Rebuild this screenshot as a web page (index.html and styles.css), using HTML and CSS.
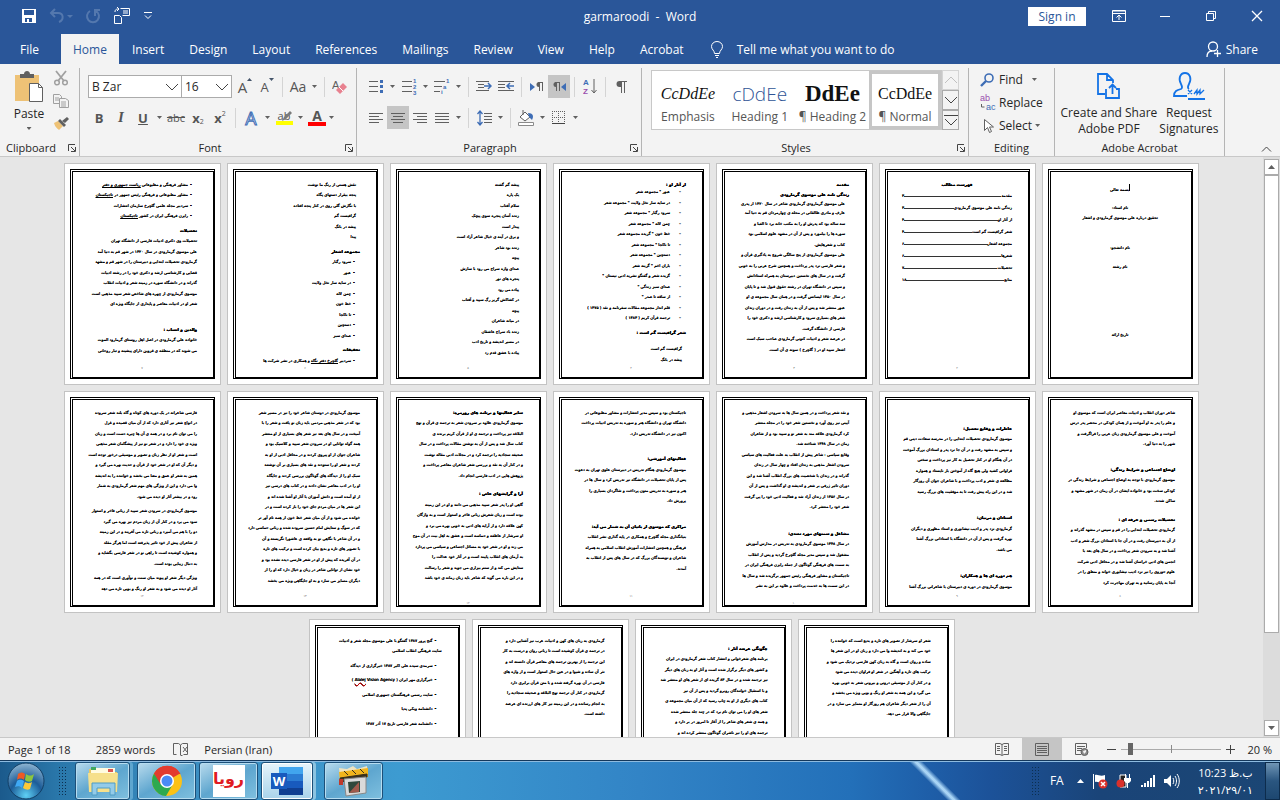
FILE: index.html
```html
<!DOCTYPE html>
<html lang="en">
<head>
    <meta charset="UTF-8">
    <meta name="viewport" content="width=device-width, initial-scale=1.0">
    <title>garmaroodi - Word</title>
    <link rel="stylesheet" href="styles.css">
</head>
<body>
    <!-- Title bar -->
    <header class="titlebar">
        <div class="quick">
            <button aria-label="Save"><svg width="16" height="16" viewBox="0 0 16 16"><path d="M1 1h14v14H1z" fill="#fff"/><path d="M3 2h10v5H3zM4 10h7v4H4z" fill="#2a5699"/><path d="M6 11h2v3H6z" fill="#fff"/></svg></button>
            <button class="dim" aria-label="Undo"><svg width="24" height="16" viewBox="0 0 24 16"><path d="M6 1 2 5l4 4M2 5h7c6 0 6 7 1 9" fill="none" stroke="#5478ae" stroke-width="2"/><path d="M18 7h6l-3 3z" fill="#5478ae"/></svg></button>
            <button class="dim" aria-label="Redo"><svg width="16" height="16" viewBox="0 0 16 16"><path d="M11 3a6 6 0 1 1-6 0M10 8V2h5" fill="none" stroke="#5478ae" stroke-width="2"/></svg></button>
            <button aria-label="Touch mode"><svg width="18" height="18" viewBox="0 0 18 18"><path d="M1.500 8.500h5l2 2v6h-7zM7.500 1.500h9v7h-7M10 4h5M10 6h5M2 5c0-3 2-3 4-3M4 0l2 2-2 2" fill="none" stroke="#fff"/></svg></button>
            <button aria-label="Customize"><svg width="10" height="8" viewBox="0 0 10 8"><path d="M1 .5h8M2 3.500l3 3 3-3" fill="none" stroke="#fff"/></svg></button>
        </div>
        <h1>garmaroodi&nbsp; -&nbsp; Word</h1>
        <div class="window-tools">
            <button class="sign-in">Sign in</button>
            <button aria-label="Ribbon display"><svg width="14" height="12" viewBox="0 0 14 12"><path d="M.5 1h13M.5.5h13v11H.5zM.5 3.500h13M7 10V5M4.500 7.500 7 5l2.500 2.500" fill="none" stroke="#fff"/></svg></button>
            <button aria-label="Minimize"><svg width="12" height="12" viewBox="0 0 12 12"><path d="M1 6.500h10" stroke="#fff"/></svg></button>
            <button aria-label="Restore"><svg width="12" height="12" viewBox="0 0 12 12"><path d="M1.500 3.500h7v7h-7zM3.500 3V1.500h7v7H9" fill="none" stroke="#fff"/></svg></button>
            <button aria-label="Close"><svg width="12" height="12" viewBox="0 0 12 12"><path d="m1 1 10 10M11 1 1 11" stroke="#fff" stroke-width="1.300"/></svg></button>
        </div>
    </header>

    <nav class="tabs">
        <a class="file" href="#">File</a>
        <a class="active" href="#">Home</a>
        <a href="#">Insert</a>
        <a href="#">Design</a>
        <a href="#">Layout</a>
        <a href="#">References</a>
        <a href="#">Mailings</a>
        <a href="#">Review</a>
        <a href="#">View</a>
        <a href="#">Help</a>
        <a href="#">Acrobat</a>
        <a class="tell" href="#"><svg width="12" height="17" viewBox="0 0 12 17"><path d="M3.500 12.500c0-3-3-4-3-7a5.500 5 0 0 1 11 0c0 3-3 4-3 7zM4 14.500h4M5 16.500h2" fill="none" stroke="#fff"/></svg>Tell me what you want to do</a>
        <a class="share" href="#"><svg width="16" height="16" viewBox="0 0 16 16"><circle cx="7" cy="5.500" r="4.500" fill="none" stroke="#fff" stroke-width="1.300"/><path d="M1 16c0-4 2-6 5-6M8 12.500h7M11.500 9v7" fill="none" stroke="#fff" stroke-width="1.300"/></svg>Share</a>
    </nav>

    <!-- Ribbon -->
    <section class="ribbon">
        <div class="group clipboard">
            <div class="group-body">
                <button class="paste">
                    <svg width="30" height="32" viewBox="0 0 30 32"><path d="M1 4h24v26H1z" fill="#eec276"/><path d="M6 3h4c0-4 6-4 6 0h4v4H6z" fill="#606060"/><path d="M15.500 12.500h9l4 4v14h-13z" fill="#fff" stroke="#606060"/><path d="M24.500 12.500v4h4" fill="none" stroke="#606060"/></svg>
                    Paste
                    <i class="drop"></i>
                </button>
                <div class="stack">
                    <button aria-label="Cut"><svg width="16" height="16" viewBox="0 0 16 16"><path d="m3 1 8 10M13 1 5 11" stroke="#a0a0a0" stroke-width="1.800"/><circle cx="4" cy="12.500" r="2.300" fill="none" stroke="#a0a0a0" stroke-width="1.500"/><circle cx="12" cy="12.500" r="2.300" fill="none" stroke="#a0a0a0" stroke-width="1.500"/></svg></button>
                    <button aria-label="Copy"><svg width="16" height="14" viewBox="0 0 16 14"><path d="M.5.5h6l2 2v7h-8zM2 4h4M2 6h4" fill="none" stroke="#a0a0a0"/><path d="M6.500 4.500h6l3 2v7h-9z" fill="#f3f3f3" stroke="#a0a0a0"/><path d="M8 8h5M8 10h5M8 12h5" stroke="#a0a0a0"/></svg></button>
                    <button aria-label="Format painter"><svg width="16" height="14" viewBox="0 0 16 14"><path d="m1 7 4-2 5 5-4 4C4 12 2 11 1 7z" fill="#eec276"/><path d="m5 5 2-2 6 6-2 2z" fill="#606060"/><path d="m9 5 5-4 2 2-4 4z" fill="#606060"/></svg></button>
                </div>
            </div>
            <h2>Clipboard<svg class="launch" width="8" height="8" viewBox="0 0 8 8"><path d="M.5 7V.5H7M3 3l4 4M7.500 3v4.500H3" fill="none" stroke="#444"/></svg></h2>
        </div>

        <div class="group font">
            <div class="group-body rows">
                <div class="row">
                    <label class="combo family"><select aria-label="Font"><option>B Zar</option></select><svg width="14" height="8" viewBox="0 0 14 8"><path d="m1 1 6 6 6-6" fill="none" stroke="#444"/></svg></label>
                    <label class="combo size"><select aria-label="Font size"><option>16</option></select><svg width="14" height="8" viewBox="0 0 14 8"><path d="m1 1 6 6 6-6" fill="none" stroke="#444"/></svg></label>
                    <button class="big" aria-label="Grow font">A<svg width="5" height="3" viewBox="0 0 5 3"><path d="M0 3h5L2.500 0z" fill="#44546a"/></svg></button>
                    <button aria-label="Shrink font">A<svg width="5" height="3" viewBox="0 0 5 3"><path d="M0 0h5L2.500 3z" fill="#44546a"/></svg></button>
                    <i class="sep"></i>
                    <button class="case">Aa</button><i class="drop"></i>
                    <i class="sep"></i>
                    <button aria-label="Clear formatting"><svg class="erase" width="16" height="18" viewBox="0 0 16 18"><text x="0" y="11" fill="#606060">A</text><path d="m4 12 7-7 4 4-7 7z" fill="#e8818f"/><path d="m7 9 4 4" stroke="#fff"/></svg></button>
                </div>
                <div class="row">
                    <button><b>B</b></button>
                    <button class="serif"><b><i>I</i></b></button>
                    <button><u><b>U</b></u></button><i class="drop"></i>
                    <button class="strike"><s>abc</s></button>
                    <button><b>x</b><sub>2</sub></button>
                    <button><b>x</b><sup>2</sup></button>
                    <i class="sep"></i>
                    <button class="effects" aria-label="Text effects">A</button><i class="drop"></i>
                    <button class="mark" aria-label="Highlight">ab<svg width="17" height="16" viewBox="0 0 17 16"><path d="M0 12h17v4H0z" fill="#ff0"/><path d="m6 12 2-4 6-6 2 2-6 6z" fill="#7a7a7a"/></svg></button><i class="drop"></i>
                    <button class="color">A</button><i class="drop"></i>
                </div>
            </div>
            <h2>Font<svg class="launch" width="8" height="8" viewBox="0 0 8 8"><path d="M.5 7V.5H7M3 3l4 4M7.500 3v4.500H3" fill="none" stroke="#444"/></svg></h2>
        </div>

        <div class="group para">
            <div class="group-body rows">
                <div class="row">
                    <button aria-label="Bullets"><svg width="14" height="15" viewBox="0 0 14 15"><path d="M0 2.500h9M0 7.500h9M0 12.500h9" stroke="#606060"/><path d="M11 1h3v3h-3zM11 6h3v3h-3zM11 11h3v3h-3z" fill="#3e6db5"/></svg></button><i class="drop"></i>
                    <button aria-label="Numbering"><svg class="digits" width="15" height="19" viewBox="0 0 15 19"><path d="M0 4.500h10M0 9.500h10M0 14.500h10" stroke="#606060"/><text x="11" y="6">1</text><text x="11" y="12">2</text><text x="11" y="18">3</text></svg></button><i class="drop"></i>
                    <button aria-label="Multilevel list"><svg class="digits" width="16" height="19" viewBox="0 0 16 19"><path d="M0 4.500h11M0 9.500h8M0 14.500h6" stroke="#606060"/><text x="12" y="6">1</text><text x="9" y="12">a</text><text x="7" y="17">i</text></svg></button><i class="drop"></i>
                    <i class="sep"></i>
                    <button aria-label="Decrease indent"><svg width="16" height="11" viewBox="0 0 16 11"><path d="M0 .5h13M2 3.500h6M2 6.500h6M0 9.500h13" stroke="#606060"/><path d="M8 5h7M12 2l3 3-3 3" fill="none" stroke="#3e6db5" stroke-width="1.500"/></svg></button>
                    <button aria-label="Increase indent"><svg width="16" height="11" viewBox="0 0 16 11"><path d="M0 .5h16M0 3.500h7M0 6.500h7M0 9.500h16" stroke="#606060"/><path d="M9 5h7M12 2 9 5l3 3" fill="none" stroke="#3e6db5" stroke-width="1.500"/></svg></button>
                    <i class="sep"></i>
                    <button aria-label="Left to right"><svg width="14" height="12" viewBox="0 0 14 12"><path d="m0 2 5 4-5 4z" fill="#3e6db5"/><path d="M9 1a2.500 2.500 0 0 0 0 5z" fill="#606060"/><path d="M8 1.500h5M9.500 1v9M12.500 1v9" fill="none" stroke="#606060"/></svg></button>
                    <button class="on" aria-label="Right to left"><svg width="14" height="12" viewBox="0 0 14 12"><path d="m14 2-5 4 5 4z" fill="#3e6db5"/><path d="M4 1a2.500 2.500 0 0 0 0 5z" fill="#606060"/><path d="M3 1.500h5M4.500 1v9M7.500 1v9" fill="none" stroke="#606060"/></svg></button>
                    <i class="sep"></i>
                    <button aria-label="Sort"><svg class="sort" width="14" height="19" viewBox="0 0 14 19"><text x="0" y="8" fill="#3e6db5">A</text><text x="0" y="17" fill="#9a4fae">Z</text><path d="M11 2v14M8.500 13l2.500 3 2.500-3" fill="none" stroke="#606060"/></svg></button>
                    <i class="sep"></i>
                    <button aria-label="Show marks"><svg width="11" height="13" viewBox="0 0 11 13"><path d="M5 1H3.500a2.500 2.500 0 0 0 0 6H5z" fill="#606060"/><path d="M3 1.500h8M5.500 1v12M8.500 1v12" stroke="#606060"/></svg></button>
                </div>
                <div class="row">
                    <button aria-label="Align left"><svg width="14" height="12" viewBox="0 0 14 12"><path d="M0 1.500h14M0 4.500h10M0 7.500h14M0 10.500h10" stroke="#606060"/></svg></button>
                    <button class="on" aria-label="Center"><svg width="14" height="12" viewBox="0 0 14 12"><path d="M0 1.500h14M2 4.500h10M0 7.500h14M2 10.500h10" stroke="#606060"/></svg></button>
                    <button aria-label="Align right"><svg width="14" height="12" viewBox="0 0 14 12"><path d="M0 1.500h14M4 4.500h10M0 7.500h14M4 10.500h10" stroke="#606060"/></svg></button>
                    <button aria-label="Justify"><svg width="14" height="12" viewBox="0 0 14 12"><path d="M0 1.500h14M0 4.500h14M0 7.500h14M0 10.500h14" stroke="#606060"/></svg></button><i class="drop"></i>
                    <i class="sep"></i>
                    <button aria-label="Line spacing"><svg width="15" height="16" viewBox="0 0 15 16"><path d="M3 1v14M.5 4 3 1l2.500 3M.5 12 3 15l2.500-3" fill="none" stroke="#3e6db5" stroke-width="1.300"/><path d="M7 3.500h8M7 6.500h8M7 9.500h8M7 12.500h8" stroke="#606060"/></svg></button><i class="drop"></i>
                    <i class="sep"></i>
                    <button aria-label="Shading"><svg width="18" height="16" viewBox="0 0 18 16"><path d="m3 7 5-5 5 5-5 4zM6 0v5" fill="#fff" stroke="#606060"/><path d="M11 3c5 0 6 3 4 7l-3-3z" fill="#3e6db5"/><path d="M1.500 12.500h15v3h-15z" fill="#fff" stroke="#8a8a8a"/></svg></button><i class="drop"></i>
                    <button aria-label="Borders"><svg width="14" height="14" viewBox="0 0 14 14"><path d="M.5 0v13M6.500 0v13M12.500 0v13M0 .5h13M0 6.500h13" stroke="#606060" stroke-dasharray="1 1"/><path d="M0 12.500h13" stroke="#444"/></svg></button><i class="drop"></i>
                </div>
            </div>
            <h2>Paragraph<svg class="launch" width="8" height="8" viewBox="0 0 8 8"><path d="M.5 7V.5H7M3 3l4 4M7.500 3v4.500H3" fill="none" stroke="#444"/></svg></h2>
        </div>

        <div class="group styles">
            <div class="group-body">
                <div class="gallery">
                    <button><span class="s-emph">CcDdEe</span>Emphasis</button>
                    <button><span class="s-h1">cDdEe</span>Heading 1</button>
                    <button><span class="s-h2">DdEe</span>¶ Heading 2</button>
                    <button class="picked"><span class="s-normal">CcDdEe</span>¶ Normal</button>
                </div>
                <div class="gallery-scroll">
                    <button disabled aria-label="Previous styles"><svg width="14" height="8" viewBox="0 0 14 8"><path d="m1 7 6-6 6 6" fill="none" stroke="#c0c0c0"/></svg></button>
                    <button aria-label="Next styles"><svg width="14" height="8" viewBox="0 0 14 8"><path d="m1 1 6 6 6-6" fill="none" stroke="#444"/></svg></button>
                    <button aria-label="More styles"><svg width="14" height="11" viewBox="0 0 14 11"><path d="M0 .5h14M1 4l6 6 6-6" fill="none" stroke="#444"/></svg></button>
                </div>
            </div>
            <h2>Styles<svg class="launch" width="8" height="8" viewBox="0 0 8 8"><path d="M.5 7V.5H7M3 3l4 4M7.500 3v4.500H3" fill="none" stroke="#444"/></svg></h2>
        </div>

        <div class="group editing">
            <div class="group-body">
                <button><svg width="16" height="14" viewBox="0 0 16 14"><circle cx="9" cy="5" r="4" fill="none" stroke="#3e6db5" stroke-width="1.600"/><path d="m6 8-5 5" stroke="#3e6db5" stroke-width="2.400"/></svg>Find<i class="drop far"></i></button>
                <button><svg class="swap" width="16" height="20" viewBox="0 0 16 20"><text x="0" y="8" fill="#9a4fae">ab</text><text x="6" y="17" fill="#3e6db5">ac</text><path d="M1.500 11v3h3" fill="none" stroke="#606060"/></svg>Replace</button>
                <button><svg width="16" height="16" viewBox="0 0 16 16"><path d="M4.500 1.500v11l3-3 2 5 2-1-2-4.500h4z" fill="#fff" stroke="#606060"/></svg>Select<i class="drop"></i></button>
            </div>
            <h2>Editing</h2>
        </div>

        <div class="group acrobat">
            <div class="group-body">
                <button><svg width="26" height="28" viewBox="0 0 26 28"><path d="M9 22H2V2h9l6 6v3M11 2v6h6M10 17v9h13v-9h-3M16.500 22v-9M13 16l3.500-3.500L20 16" fill="none" stroke="#1473e6" stroke-width="1.800"/></svg>Create and Share<br>Adobe PDF</button>
                <button><svg width="32" height="28" viewBox="0 0 32 28"><path d="M14 24H1c0-5 3-6 7-7 2-1 1-3 0-5-3-5-1-11 4-11s7 6 4 11c-1 2-2 4 0 5M15 27h17" fill="none" stroke="#1473e6" stroke-width="1.800"/><path d="m15 18 4 4M19 18l-4 4M21 22l3-4v4l3-4v4l4-4" fill="none" stroke="#1473e6" stroke-width="1.300"/></svg>Request<br>Signatures</button>
            </div>
            <h2>Adobe Acrobat</h2>
        </div>
        <button class="collapse" aria-label="Collapse ribbon"><svg width="11" height="6" viewBox="0 0 11 6"><path d="m1 5.500 4.500-4.500L10 5.500" fill="none" stroke="#444"/></svg></button>
    </section>

    <!-- Document -->
    <main class="workspace">
        <div class="pages" lang="fa" dir="rtl">
            <article class="page"><div class="frame cover">
                <p class="sp4"><i class="caret"></i>بسمه تعالی</p>
                <p class="sp9">نام استاد:</p>
                <p>تحقیق درباره علی موسوی گرمارودی و اشعار</p>
                <p class="sp20">نام دانشجو:</p>
                <p class="sp9">نام رشته</p>
                <p class="sp58">تاریخ ارائه</p>
            </div></article>

            <article class="page"><div class="frame toc">
                <p class="head">فهرست مطالب</p>
                <p><a href="#">مقدمه</a><span>۳</span></p>
                <p><a href="#">زندگی نامه علی موسوی گرمارودی</a><span>۳</span></p>
                <p><a href="#">از آثار او</a><span>۴</span></p>
                <p><a href="#">شعر گرافیست گم است</a><span>۴</span></p>
                <p><a href="#">مجموعه اشعار</a><span>۶</span></p>
                <p><a href="#">شعرها</a><span>۶</span></p>
                <p><a href="#">تحصیلات</a><span>۷</span></p>
                <p><a href="#">منابع</a><span>۱۸</span></p>
                <footer>۲</footer>
            </div></article>

            <article class="page"><div class="frame">
                <h3>مقدمه</h3>
                <h3>زندگی نامه علی موسوی گرمارودی</h3>
                <p class="in tight">علی موسوی گرمارودی گرمارودی شاعر در سال ۱۳۲۰ از پدری</p>
                <p class="in">عارف و مادری طالقانی در محله ی چهارمردان قم به دنیا آمد</p>
                <p class="in">سه ساله بود که پدرش او را به مکتب خانه برد تا الفبا و</p>
                <p class="in">سوره ها را بیاموزد و پس از آن در مشهد علوم اسلامی بود</p>
                <p class="in">کتاب و شعرهایش.</p>
                <p class="in">علی موسوی گرمارودی از پنج سالگی شروع به یادگیری قرآن و</p>
                <p class="in">و شعر فارسی نزد پدر پرداخت و همچنین شرح عربی را به خوبی</p>
                <p class="in">گرفت و در سال های نخستین دبیرستان به همراه استادانش</p>
                <p class="in">و سپس در دانشگاه تهران در رشته حقوق قبول شد و تا پایان</p>
                <p class="in">در سال ۱۳۵۰ لیسانس گرفت و در همان سال مجموعه ی او</p>
                <p class="in">عبور منتشر شد و پس از آن به زندان رفت و در دوران زندان</p>
                <p class="in">شعر های بسیاری سرود و کارشناسی ارشد و دکتری خود را</p>
                <p class="in">فارسی از دانشگاه گرفت.</p>
                <p class="in">در عرصه شعر و ادبیات کنونی گرمارودی صاحب سبک است</p>
                <p class="in">اشعار سپید او در ( گلچرخ ) نمونه ی آن است.</p>
                <footer>۳</footer>
            </div></article>

            <article class="page"><div class="frame">
                <h3 class="tight2">از آثار او :</h3>
                <p class="item far">عبور " مجموعه شعر</p>
                <p class="item far">در سایه سار نخل ولایت " مجموعه شعر</p>
                <p class="item far">سرود رگبار " مجموعه شعر</p>
                <p class="item far">چمن لاله " مجموعه شعر</p>
                <p class="item far">خط خون " گزیده مجموعه شعر</p>
                <p class="item far">تا ناکجا " مجموعه شعر</p>
                <p class="item far">دستچین " مجموعه شعر</p>
                <p class="item far">باران اخم " گزینه شعر</p>
                <p class="item far">گزیده شعر و گفتگو نشریه ادبی نیستان "</p>
                <p class="item far">صدای سبز زندگی "</p>
                <p class="item far">از ساقه تا صدر "</p>
                <p class="item far">قلم انداز مجموعه مقالات سفرنامه و نقد ( ۱۳۷۵ )</p>
                <p class="item far">ترجمه قرآن کریم ( ۱۳۸۳ )</p>
                <h3 class="sp4">شعر گرافیست گم است :</h3>
                <p class="in sp6">گرافیست گم است</p>
                <p class="in">پیشه در بانگ</p>
                <footer>۴</footer>
            </div></article>

            <article class="page"><div class="frame">
                <p class="in">پیشه گم گشته</p>
                <p class="in">یک پاره</p>
                <p class="in">سلام آفتاب</p>
                <p class="in">زنده آسان پنجره سوی پیچک</p>
                <p class="in">پیدار است</p>
                <p class="in">و برق در آینه ی خیال شاعر آزاد است</p>
                <p class="in">زنده بود شاعر</p>
                <p class="in">پیچه</p>
                <p class="in">صدای واژه سراج می رود با سازش</p>
                <p class="in">پنجره های نور</p>
                <p class="in">پیاده می رود</p>
                <p class="in">در کشاکش گریز رگ سپید و آفتاب</p>
                <p class="in">پیچه</p>
                <p class="in">در میانه شاعران</p>
                <p class="in">زنده باد سراج عاشقان</p>
                <p class="in">در مسیر اندیشه و تاریخ ادب</p>
                <p class="in">پیاده با عشق قدم زد</p>
                <footer>۵</footer>
            </div></article>

            <article class="page"><div class="frame">
                <p class="in">نقش هستی از رنگ ما نوشت</p>
                <p class="in">پنجه بیقرار دستهای پگاه</p>
                <p class="in">با نگارش گلی روی در کنار پنجه افتاده</p>
                <p class="in">گرافیست گم</p>
                <p class="in">پیشه در بانگ</p>
                <p class="in">پیدا</p>
                <h3 class="sp4">مجموعه اشعار</h3>
                <p class="item">سرود رگبار</p>
                <p class="item">عبور</p>
                <p class="item">در سایه سار نخل ولایت</p>
                <p class="item">چمن لاله</p>
                <p class="item">خط خون</p>
                <p class="item">تا ناکجا</p>
                <p class="item">دستچین</p>
                <p class="item">صدای سبز</p>
                <h3 class="sp4">تحقیقات</h3>
                <p class="item">سردبیر <u>گلچرخ دفتر نگاه</u> و همکاری در نشر شرکت ها</p>
                <footer>۶</footer>
            </div></article>

            <article class="page"><div class="frame">
                <p class="item">مشاور فرهنگی و مطبوعاتی <u>ریاست جمهوری و دفتر</u></p>
                <p class="item">مشاور مطبوعاتی و فرهنگی رئیس جمهور در <u>تاجیکستان</u></p>
                <p class="item">سردبیر مجله علمی گلچرخ سازمان انتشارات</p>
                <p class="item">رایزن فرهنگی ایران در کشور <u>تاجیکستان</u></p>
                <h3 class="sp4">تحصیلات</h3>
                <p>تحصیلات وی دکتری ادبیات فارسی از دانشگاه تهران</p>
                <p>علی موسوی گرمارودی در سال ۱۳۲۰ در شهر قم به دنیا آمد</p>
                <p>گرمارودی تحصیلات ابتدایی و دبیرستان را در شهر قم و مشهد</p>
                <p>قضایی و کارشناسی ارشد و دکتری خود را در رشته ادبیات</p>
                <p>گذراند و در دانشگاه سوره در زمینه شعر و ادبیات انقلاب</p>
                <p>موسوی گرمارودی از چهره های شاخص شعر سپید مذهبی است</p>
                <p>شعر او در ادبیات معاصر و پایداری از جایگاه ویژه ای</p>
                <h3 class="sp14">والدین و انساب :</h3>
                <p>خانواده علی گرمارودی در اصل اهل روستای گرمارود الموت</p>
                <p>می شوند که در منطقه ی قزوین دارای پیشینه و تبار روحانی</p>
                <footer>۷</footer>
            </div></article>

            <!-- Second row -->
            <article class="page"><div class="frame">
                <p>شاعر دوران انقلاب و ادبیات معاصر ایران است که موسوی او</p>
                <p>و علم را پدر به او آموخت و از همان کودکی در محضر پدر درس</p>
                <p>آموخت و علی موسوی گرمارودی زبان عربی را فراگرفت و</p>
                <p>شهر را به دنیا آورد.</p>
                <h3 class="sp14">اوضاع اجتماعی و شرایط زندگی:</h3>
                <p>موسوی گرمارودی با توجه به اوضاع اجتماعی و شرایط زندگی در</p>
                <p>کودکی سخت بود و خانواده ایشان در آن زمان در شهر مشهد و</p>
                <p>ساکن شدند.</p>
                <h3 class="sp8">تحصیلات رسمی و حرفه ای :</h3>
                <p>گرمارودی تحصیلات ابتدایی را در قم و سپس در مشهد گذراند و</p>
                <p>از آن به دبیرستان رفت و در آن جا با استادان بزرگ شعر و ادب</p>
                <p>آشنا شد و به سرودن شعر پرداخت و در سال های بعد با</p>
                <p>انجمن های ادبی خراسان آشنا شد و در محافل ادبی شرکت</p>
                <p>علوم حوزوی را نیز نزد ادیب نیشابوری خواند و منطق را در</p>
                <p>آنجا به پایان رسانید و به تهران مهاجرت کرد</p>
                <footer>۸</footer>
            </div></article>

            <article class="page"><div class="frame">
                <h3 class="sp16">خاطرات و وقایع تحصیل:</h3>
                <p>موسوی گرمارودی تحصیلات ابتدایی را در مدرسه سعادت دینی قم</p>
                <p>و سپس به مشهد رفت و در آن جا نزد پدر و استادان بزرگ آموخت</p>
                <p>در آن هنگام او در کنار تحصیل به کار نیز پرداخت و سختی</p>
                <p>فراوانی کشید ولی هیچ گاه از آموختن باز نایستاد و همواره</p>
                <p>مطالعه ی شعر و ادب پرداخت و با شاعران جوان آن روزگار</p>
                <p>شد و در این راه پیش رفت تا به موفقیت های بزرگ رسید</p>
                <h3 class="sp16">استادان و مربیان:</h3>
                <p>گرمارودی نزد پدر و ادیب نیشابوری و استاد مطهری و دیگران</p>
                <p>بهره گرفت و پس از آن در دانشگاه با استادانی بزرگ آشنا</p>
                <p>می باشد.</p>
                <h3 class="sp16">هم دوره ای ها و همکاران:</h3>
                <p>موسوی گرمارودی در دوره ی دبیرستان با شاعرانی بزرگ آشنا</p>
                <footer>۹</footer>
            </div></article>

            <article class="page"><div class="frame">
                <p>و نقد شعر پرداخت و در همین سال ها به سرودن اشعار مذهبی و</p>
                <p>آیینی نیز روی آورد و نخستین شعر خود را در مجله منتشر</p>
                <p>کرد گرمارودی علاقه مند به شعر نو و سپید بود و از شاعران</p>
                <p>زمان در سال ۱۳۴۸ شناخته شد.</p>
                <p>وقایع سیاسی : شاعر پیش از انقلاب به علت فعالیت های سیاسی</p>
                <p>سرودن اشعار مذهبی به زندان افتاد و چهار سال در زندان</p>
                <p>گذراند و در زندان با شخصیت های بزرگ انقلاب آشنا شد و این</p>
                <p>دوران تاثیر ژرفی بر شعر و اندیشه ی او گذاشت و پس از آن</p>
                <p>در سال ۱۳۵۶ از زندان آزاد شد و فعالیت ادبی خود را پی گرفت</p>
                <p>شعر خود را منتشر کرد.</p>
                <h3 class="sp16">مشاغل و سمتهای مورد تصدی:</h3>
                <p>در سال ۱۳۴۸ موسوی گرمارودی به تدریس در مدارس آموزش</p>
                <p>مشغول شد و سپس مدیر مجله گلچرخ گردید و پس از انقلاب</p>
                <p>به سمت های فرهنگی گوناگون از جمله رایزن فرهنگی ایران در</p>
                <p>تاجیکستان و مشاور فرهنگی رئیس جمهور برگزیده شد و سال ها</p>
                <p>در این سمت ها به خدمت پرداخت و علاوه بر این به نشر</p>
                <footer>۱۰</footer>
            </div></article>

            <article class="page"><div class="frame">
                <p>تاجیکستان بود و سپس مدیر انتشارات و مشاور مطبوعاتی در</p>
                <p>دانشگاه تهران و دانشگاه هنر و سوره به تدریس ادبیات پرداخت</p>
                <p>اکنون نیز در دانشگاه تدریس دارد.</p>
                <h3 class="sp14">فعالیتهای آموزشی:</h3>
                <p>موسوی گرمارودی هنگام تدریس در دبیرستان علوی تهران به دعوت</p>
                <p>پس از پایان تحصیلات در دانشگاه نیز تدریس کرد و سال ها در</p>
                <p>هنر و سوره به تدریس متون پرداخت و شاگردان بسیاری را</p>
                <p>پرورش داد.</p>
                <h3 class="sp14">مراکزی که موسوی از بانیان آن به شمار می آید:</h3>
                <p>بنیانگذاری مجله گلچرخ و همکاری در پایه گذاری نشر انقلاب</p>
                <p>فرهنگی و همچنین انتشارات آموزش انقلاب اسلامی به همراه</p>
                <p>شاعران و نویسندگان بزرگ که در سال های پس از انقلاب به</p>
                <p>آمدند.</p>
                <footer>۱۱</footer>
            </div></article>

            <article class="page"><div class="frame">
                <h3>سایر فعالیتها و برنامه های روزمره:</h3>
                <p>موسوی گرمارودی علاوه بر سرودن شعر به ترجمه ی قرآن و نهج</p>
                <p>البلاغه نیز پرداخت و ترجمه ی او از قرآن کریم برنده ی</p>
                <p>کتاب سال شد و پس از آن به نوشتن مقالات پرداخت و در سال</p>
                <p>صحیفه سجادیه را ترجمه کرد و در مجلات ادبی مقاله نوشت</p>
                <p>و در کنار آن به نقد و بررسی شعر شاعران معاصر پرداخت و</p>
                <p>پژوهش هایی در ادب فارسی انجام داد.</p>
                <h3 class="sp8">آرا و گرایشهای خاص :</h3>
                <p>گاهی او را پدر شعر سپید مذهبی می دانند و او در این زمینه</p>
                <p>بوده است و زبان شعرش زبانی فاخر و استوار است و به واژگان</p>
                <p>کهن علاقه دارد و از آرایه های ادبی به خوبی بهره می برد و</p>
                <p>او سرشار از عاطفه و حماسه است و عشق به اهل بیت در آن موج</p>
                <p>می زند و او در شعر خود به مسائل اجتماعی و سیاسی می پردازد</p>
                <p>به آرمان های انقلاب پایبند است و در آثار خود عدالت را</p>
                <p>ستایش می کند و از ستم بیزاری می جوید و شعر را رسالت</p>
                <p>و در این باره می گوید که شاعر باید زبان زمانه ی خود باشد</p>
                <footer>۱۲</footer>
            </div></article>

            <article class="page"><div class="frame">
                <p>موسوی گرمارودی در دوستان شاعر خود را نیز در مسیر شعر</p>
                <p>بود که در شعر مذهبی مردمی باید زبان نو یافت و شعر را با</p>
                <p>آمیخت و در سال های بعد نیز شعر های بسیاری از او منتشر</p>
                <p>همه گواه توانایی او در سرودن شعر سپید و کلاسیک بود و</p>
                <p>شاعران جوان از او پیروی کردند و در محافل ادبی از او به</p>
                <p>کردند و شعر او را ستودند و نقد های بسیاری بر آن نوشتند</p>
                <p>سبک او را از دیدگاه های گوناگون بررسی کردند و جایگاه</p>
                <p>او را در ادب معاصر نشان دادند و در کتاب های درسی نیز</p>
                <p>از او آمده است و دانش آموزان با آثار او آشنا شده اند و</p>
                <p>این شعر ها در میان مردم جای خود را باز کرده است و در</p>
                <p>خوانده می شود و از آن میان شعر خط خون از همه نام آور تر</p>
                <p>که در سوگ و ستایش امام حسین سروده شده و زبانی حماسی دارد</p>
                <p>و در آن شاعر با نگاهی نو به واقعه ی عاشورا نگریسته و آن</p>
                <p>با تصویر های تازه و بدیع بیان کرده است و ترکیب های تازه</p>
                <p>در آن آفریده که پیش از او در شعر فارسی دیده نشده بود و</p>
                <p>خود نشان از توانایی شاعر در زبان و خیال دارد که او را از</p>
                <p>دیگران متمایز می سازد و به او جایگاهی ویژه می بخشد</p>
                <footer>۱۳</footer>
            </div></article>

            <article class="page"><div class="frame">
                <p>فارسی شاعرانه در یک دوره های کوتاه و گاه بلند شعر سروده</p>
                <p>در انواع شعر نیز آثاری دارد که از آن میان قصیده و غزل</p>
                <p>را می توان نام برد و در همه ی آن ها چیره دست است و زبان</p>
                <p>ویژه ی خود را دارد و در شعر نو نیز از پیشگامان شعر مذهبی</p>
                <p>است و شعر او از نظر زبان و تصویر و موسیقی درخور توجه است</p>
                <p>و دیگر آن که او در شعر خود از قرآن و حدیث بهره می گیرد و</p>
                <p>همین به شعر او عمق و معنا می بخشد و خواننده را به اندیشه</p>
                <p>وا می دارد و این از ویژگی های مهم شعر گرمارودی به شمار</p>
                <p>رود و در بیشتر آثار او دیده می شود.</p>
                <p class="sp4">موسوی گرمارودی در سرودن شعر سپید از زبانی فاخر و استوار</p>
                <p>سود می برد و در کنار آن از زبان مردم نیز بهره می گیرد</p>
                <p>دو را با هم می آمیزد و زبانی تازه می آفریند و در این زمینه</p>
                <p>از شاعران پیش از خود تاثیر پذیرفته است اما هرگز مقلد</p>
                <p>و همواره کوشیده است تا راهی نو در شعر فارسی بگشاید و</p>
                <p>به دنبال زیبایی بوده است.</p>
                <p class="sp4">ویژگی دیگر شعر او پیوند میان سنت و نوآوری است که در همه</p>
                <p>آثار او دیده می شود و به شعر او رنگ و بویی تازه می دهد</p>
                <footer>۱۴</footer>
            </div></article>

            <!-- Third row -->
            <article class="page"><div class="frame">
                <p>شعر او سرشار از تصویر های تازه و بدیع است که خواننده را</p>
                <p>خود می کند و به اندیشه وا می دارد و زبان او در این شعر ها</p>
                <p>ساده و روان است و گاه به زبان کهن فارسی نزدیک می شود و</p>
                <p>ترکیب های تازه و آهنگین در شعر او فراوان دیده می شود</p>
                <p>و در کنار آن از موسیقی درونی و بیرونی شعر به خوبی بهره</p>
                <p>می گیرد و این همه به شعر او رنگ و بویی ویژه می بخشد و</p>
                <p>آن را از شعر دیگر شاعران هم روزگار او متمایز می سازد و در</p>
                <p>جایگاهی والا قرار می دهد.</p>
            </div></article>

            <article class="page"><div class="frame">
                <h3 class="sp8">چگونگی عرضه آثار :</h3>
                <p>برنامه های شعرخوانی و انتشار کتاب شعر گرمارودی در ایران</p>
                <p>و کشور های دیگر برگزار شده است و آثار او به زبان های دیگر</p>
                <p>نیز ترجمه شده و در سال ۸۳ گزیده ای از شعر های او منتشر شد</p>
                <p>و با استقبال خوانندگان روبرو گردید و پس از آن نیز</p>
                <p>کتاب های دیگری از او به چاپ رسید که از آن میان مجموعه ی</p>
                <p>شعر های او را می توان نام برد که در چند جلد منتشر شده</p>
                <p>و همه ی شعر های شاعر را از آغاز تا امروز در بر دارد و</p>
                <p>ترجمه های او را نیز ناشران گوناگون منتشر کرده اند و</p>
            </div></article>

            <article class="page"><div class="frame">
                <p>گرمارودی به زبان های کهن و ادبیات عرب نیز آشنایی دارد و</p>
                <p>در ترجمه ی قرآن کوشیده است تا زبانی روان و درست به کار</p>
                <p>این ترجمه را از بهترین ترجمه های معاصر قرآن دانسته اند و</p>
                <p>نثر آن ساده و شیوا و در عین حال استوار است و از واژه های</p>
                <p>فارسی در آن بهره گرفته شده و با متن قرآن برابری دارد</p>
                <p>گرمارودی در کنار آن ترجمه نهج البلاغه و صحیفه سجادیه را</p>
                <p>به انجام رسانده و در این زمینه نیز کار های ارزنده ای عرضه</p>
                <p>داشته است.</p>
            </div></article>

            <article class="page"><div class="frame">
                <p class="item">گنج پرور ۱۳۸۷ گفتگو با علی موسوی مجله شعر و ادبیات</p>
                <p>سایت فرهنگی انقلاب اسلامی</p>
                <p class="item sp4">سرمدی سیده علی اکبر ۱۳۸۷ خبرگزاری از دیدگاه</p>
                <p class="item sp4">خبرگزاری مهر ایران ( <bdi><span class="typo">Alalej</span> Vision Agency</bdi> )</p>
                <p class="item sp4">سایت رسمی فرهنگستان جمهوری اسلامی</p>
                <p class="item sp4">دانشنامه ویکی پدیا</p>
                <p class="item sp4">دانشنامه شعر فارسی تاریخ ۱۷ آذر ۱۳۸۷</p>
            </div></article>
        </div>

        <div class="scrollbar">
            <button aria-label="Scroll up"><svg width="7" height="4" viewBox="0 0 7 4"><path d="M0 4h7L3.500 0z" fill="#606060"/></svg></button>
            <div class="thumb"></div>
            <div class="rail"></div>
            <button aria-label="Scroll down"><svg width="7" height="4" viewBox="0 0 7 4"><path d="M0 0h7L3.500 4z" fill="#606060"/></svg></button>
        </div>
    </main>

    <!-- Status bar -->
    <footer class="status">
        <span class="count">Page 1 of 18</span>
        <span class="count">2859 words</span>
        <svg width="15" height="13" viewBox="0 0 15 13"><path d="M3.500 11.500h-3v-11h5l2 1.500v10M7.500 2l2-1.500h5v11h-4M7.500 12.500h2M10 4l4 5M14 4l-4 5" fill="none" stroke="#606060"/></svg>
        <span>Persian (Iran)</span>
        <div class="view">
            <button aria-label="Read mode"><svg width="14" height="13" viewBox="0 0 14 13"><path d="M.5.500h4.500l2 1 2-1h4.500v11H9l-2 1-2-1H.5zM7 1v11M2 3.500h3M2 5.500h3M2 7.500h3M9 3.500h3M9 5.500h3M9 7.500h3" fill="none" stroke="#606060"/></svg></button>
            <button class="on" aria-label="Print layout"><svg width="14" height="13" viewBox="0 0 14 13"><path d="M.5.500h13v12H.5zM2 3.500h10M2 5.500h10M2 7.500h10M2 9.500h10" fill="none" stroke="#606060"/></svg></button>
            <button aria-label="Web layout"><svg width="14" height="13" viewBox="0 0 14 13"><path d="M6 11.500H.5V.5h11V5M2 3.500h8M2 5.500h5M2 7.500h4" fill="none" stroke="#606060"/><circle cx="9.500" cy="9" r="3.500" fill="#8a8a8a" stroke="#606060"/><path d="m8 8 3-1v2l-2 2z" fill="#f3f3f3"/></svg></button>
        </div>
        <div class="zoom">
            <button aria-label="Zoom out"><svg width="9" height="9" viewBox="0 0 9 9"><path d="M0 4.500h9" stroke="#444"/></svg></button>
            <input type="range" min="10" max="190" value="22" aria-label="Zoom">
            <button aria-label="Zoom in"><svg width="9" height="9" viewBox="0 0 9 9"><path d="M0 4.500h9M4.500 0v9" stroke="#444"/></svg></button>
        </div>
        <span class="percent">20 %</span>
    </footer>

    <!-- Taskbar -->
    <footer class="taskbar">
        <button class="start" aria-label="Start"><svg width="38" height="38" viewBox="0 0 38 38">
            <defs><radialGradient id="orb" cx=".5" cy=".9" r=".9"><stop offset="0" stop-color="#5ed0f5"/><stop offset=".5" stop-color="#1c5c98"/><stop offset="1" stop-color="#8fb6d3"/></radialGradient></defs>
            <circle cx="19" cy="19" r="18" fill="url(#orb)" stroke="#123f66"/>
            <path d="M11 12c3-2 5-2 7 0l-1 6c-2-2-5-2-7 0z" fill="#ee5a24"/><path d="M19 12c3 2 5 2 8 0l-2 7c-2 1-5 1-7-1z" fill="#8cc63f"/><path d="M10 19c3-2 5-1 7 0l-2 7c-2-2-4-2-7-1z" fill="#3fa9f5"/><path d="M18 20c2 1 4 2 7 0l-2 7c-2 1-4 1-7-1z" fill="#fcc938"/>
        </svg></button>
        <i class="grip"></i>
        <div class="apps">
            <button class="app" aria-label="Explorer"><svg width="34" height="32" viewBox="0 0 34 32"><path d="M3 4h10l2 3h16v20H3z" fill="#e8c765"/><path d="M5 3h24v20H5z" fill="#fffbe0"/><path d="M2 8h30l-1 19H3z" fill="#f6e08c"/><path d="M5 2h5v3H5z" fill="#41a85f"/><path d="M22 4h5v3h-5z" fill="#d9534f"/><path d="M6 30V18h23v12h-5v-7H11v7z" fill="#93cbe9" stroke="#4f9cc4"/></svg></button>
            <button class="app wide" aria-label="Chrome"><svg width="32" height="32" viewBox="0 0 32 32"><circle cx="16" cy="16" r="15" fill="#fbc116"/><path d="M16 16 3 8.500a15 15 0 0 1 26 0z" fill="#e33b2e"/><path d="M3 8.500A15 15 0 0 0 15 31l7-12-6 3z" fill="#2da94f"/><path d="M16 9h13.500A15 15 0 0 0 3 8.500L9.500 19z" fill="#e33b2e"/><circle cx="16" cy="16" r="7" fill="#fff"/><circle cx="16" cy="16" r="5.500" fill="#4a8af4"/></svg></button>
            <button class="app wide"><span class="roya" lang="fa">رویا</span></button>
            <button class="app lit" aria-label="Word"><svg width="34" height="30" viewBox="0 0 34 30"><path d="M9 1h24v7H9z" fill="#41a5ee"/><path d="M9 8h24v7H9z" fill="#2b7cd3"/><path d="M9 15h24v7H9z" fill="#185abd"/><path d="M9 22h24v7H9z" fill="#103f91"/><path d="M1 7h16v16H1z" fill="#185abd"/><text x="9" y="20" font-size="13" font-weight="bold" text-anchor="middle" fill="#fff">W</text></svg></button>
            <button class="app wide last" aria-label="Media"><svg width="34" height="32" viewBox="0 0 34 32"><path d="m2 3 8 1 6-3 4 3 10-3 1 8-28 4z" fill="#efe3c0"/><path d="m2 7 29-4v9L3 16z" fill="#f0b41c"/><path d="m3 13 27-4v3L4 17zM7 6l4 4M15 5l4 4M23 4l4 4" fill="#38301c" stroke="#38301c"/><path d="M2 14h4v6H2z" fill="#c0392b"/><path d="m7 14 22-2v16L9 31z" fill="#dadada" stroke="#888"/><path d="m11 17 12-1v11l-11 1z" fill="#30483c"/><path d="m12 28 10-11v10z" fill="#a05a4c"/></svg></button>
        </div>
        <div class="tray">
            <i class="grip"></i>
            <span class="lang">FA</span>
            <svg width="7" height="4" viewBox="0 0 7 4"><path d="M0 4h7L3.500 0z" fill="#fff"/></svg>
            <svg width="16" height="16" viewBox="0 0 16 16"><path d="M1.500 1v15" stroke="#fff"/><path d="M3 2c3-1 5 2 10 0v7c-5 2-7-1-10 0z" fill="#fff"/><circle cx="11" cy="11" r="4.500" fill="#d9302b"/><path d="m9 9 4 4M13 9l-4 4" stroke="#fff" stroke-width="1.500"/></svg>
            <svg width="16" height="16" viewBox="0 0 16 16"><path d="M4 2h6v12H4z" fill="#222" stroke="#fff"/><path d="M8 5h7v3l-2 2h-3L8 8z" fill="#fff"/><path d="M9.500 1v4M13.500 1v4M11.500 10v5" fill="none" stroke="#fff"/><circle cx="4.500" cy="10.500" r="4" fill="#d9302b"/></svg>
            <svg width="16" height="14" viewBox="0 0 16 14"><path d="M1 11h2v2H1zM4 9h2v4H4zM7 7h2v6H7zM10 4h2v9h-2zM13 1h2v12h-2z" fill="#fff"/></svg>
            <svg width="16" height="14" viewBox="0 0 16 14"><path d="M0 5h3l4-4v12L3 9H0z" fill="#fff"/><path d="M9 4c1 2 1 4 0 6M11 2c2 3 2 7 0 10M13 0c3 4 3 10 0 14" fill="none" stroke="#fff"/></svg>
            <div class="clock" lang="fa"><span>10:23 ب.ظ</span><span>۲۰۲۱/۲۹/۰۱</span></div>
        </div>
        <button class="peek" aria-label="Show desktop"></button>
    </footer>
</body>
</html>
```
FILE: styles.css
```css
* {
    margin: 0;
    padding: 0;
    box-sizing: border-box;
}

body {
    height: 100vh;
    display: flex;
    flex-direction: column;
    overflow: hidden;
    font-family: "Open Sans", "DejaVu Sans", sans-serif;
    font-size: 12px;
    color: #262626;
    background: #e6e6e6;
}

button {
    border: none;
    background: none;
    font: inherit;
    color: inherit;
}

svg {
    display: block;
    flex: none;
}

a {
    color: inherit;
    text-decoration: none;
}

/* Title bar */
.titlebar {
    height: 32px;
    flex: none;
    display: grid;
    grid-template-columns: 1fr auto 1fr;
    align-items: center;
    background: #2a5699;
    color: #fff;
}

.titlebar h1 {
    font-size: 12px;
    font-weight: normal;
}

.quick {
    display: flex;
    align-items: center;
    gap: 12px;
    padding-left: 21px;
}

.window-tools {
    display: flex;
    justify-content: flex-end;
    align-items: center;
}

.window-tools button {
    width: 46px;
    height: 31px;
    display: grid;
    place-items: center;
}

.window-tools .sign-in {
    width: 58px;
    height: 19px;
    margin-right: 10px;
    background: #fff;
    color: #2a5699;
}

/* Tabs */
.tabs {
    height: 32px;
    flex: none;
    display: flex;
    align-items: flex-end;
    gap: 1px;
    background: #2a5699;
    color: #fff;
}

.tabs a {
    height: 30px;
    display: flex;
    align-items: center;
    padding: 0 12px;
}

.tabs .file {
    width: 60px;
    padding-left: 20px;
}

.tabs .active {
    background: #f3f3f3;
    color: #2a5699;
}

.tabs .tell {
    gap: 14px;
    padding-left: 14px;
}

.tabs .share {
    gap: 4px;
    margin-left: auto;
    padding-right: 22px;
}

/* Ribbon */
.ribbon {
    height: 93px;
    flex: none;
    display: flex;
    background: #f3f3f3;
    border-bottom: 1px solid #c8c8c8;
}

.group {
    display: flex;
    flex-direction: column;
    height: 88px;
    margin-top: 4px;
    border-right: 1px solid #b4b4b4;
}

.group h2 {
    position: relative;
    height: 16px;
    line-height: 16px;
    font-size: 11px;
    font-weight: normal;
    text-align: center;
}

.launch {
    position: absolute;
    right: 3px;
    top: 4px;
}

.group-body {
    flex: 1;
    display: flex;
}

.rows {
    flex-direction: column;
    padding-top: 7px;
    gap: 8px;
}

.row {
    display: flex;
    align-items: center;
    height: 23px;
}

.row button {
    width: 22px;
    height: 23px;
    display: flex;
    align-items: center;
    justify-content: center;
    color: #555;
    font-size: 13px;
}

.row .on,
.view .on {
    background: #c5c5c5;
}

.drop {
    width: 5px;
    height: 3px;
    margin: 0 3px;
    flex: none;
    background: #606060;
    clip-path: polygon(0 0, 100% 0, 50% 100%);
}

.sep {
    width: 1px;
    height: 20px;
    margin: 0 4px;
    background: #d4d4d4;
}

.clipboard {
    width: 80px;
}

.clipboard h2 {
    padding-right: 17px;
}

.paste {
    width: 58px;
    display: flex;
    flex-direction: column;
    align-items: center;
    gap: 2px;
    padding-top: 3px;
}

.paste .drop {
    margin-top: 3px;
}

.stack {
    display: flex;
    flex-direction: column;
    gap: 8px;
    padding-top: 2px;
    margin-left: -5px;
}

.font {
    width: 277px;
}

.font .row {
    padding-left: 8px;
}

.font h2 {
    padding-right: 16px;
}

.combo {
    position: relative;
    height: 23px;
    background: #fff;
    border: 1px solid #ababab;
}

.combo svg {
    position: absolute;
    right: 2px;
    top: 7px;
    pointer-events: none;
}

.combo select {
    width: 100%;
    height: 100%;
    padding-left: 3px;
    appearance: none;
    border: none;
    background: none;
    font: inherit;
    color: inherit;
}

.family {
    width: 94px;
}

.size {
    width: 51px;
    margin-left: -1px;
    margin-right: 2px;
}

.row .big {
    font-size: 15px;
}

.font .row button > svg[width="5"] {
    align-self: flex-start;
    margin-top: 3px;
}

.row .case {
    font-size: 14px;
}

.row .serif {
    font-family: "Liberation Serif", serif;
    font-size: 15px;
}

.row .strike {
    font-size: 11px;
}

.row sub,
.row sup {
    font-size: 7px;
}

.row sub {
    padding-top: 8px;
}

.row sup {
    padding-bottom: 8px;
}

.row .effects {
    font-size: 18px;
    color: #fff;
    -webkit-text-stroke: 1px #3e6db5;
}

.row .mark {
    position: relative;
    font-size: 11px;
    padding-bottom: 5px;
}

.mark svg {
    position: absolute;
    left: 3px;
    top: 3px;
}

.row .color {
    height: 17px;
    border-bottom: 4px solid #f00;
    width: 18px;
    margin-left: 2px;
    font-weight: bold;
    font-size: 14px;
}

.para {
    width: 285px;
}

.para .row {
    padding-left: 8px;
}

.para h2 {
    padding-right: 18px;
}

.erase {
    font: 11px "Liberation Sans", sans-serif;
}

.digits {
    font: bold 6px "Liberation Sans", sans-serif;
    fill: #3e6db5;
}

.sort {
    font: bold 8px "Liberation Sans", sans-serif;
}

.swap {
    font: 9px "Liberation Sans", sans-serif;
}

.styles {
    width: 327px;
}

.styles .group-body {
    padding: 2px 9px 0;
    align-items: flex-start;
}

.styles h2 {
    padding-right: 18px;
}

.gallery {
    flex: 1;
    height: 60px;
    display: flex;
    background: #fff;
    border: 1px solid #c8c8c8;
}

.gallery button {
    flex: 1;
    display: flex;
    flex-direction: column;
    align-items: center;
    justify-content: flex-end;
    padding-bottom: 1px;
    color: #555;
    white-space: nowrap;
    border: 3px solid transparent;
}

.gallery .picked {
    border-color: #c6c6c6;
}

.gallery span {
    line-height: 28px;
    color: #111;
}

.s-emph {
    font: italic 16px "Liberation Serif", serif;
}

.gallery .s-h1 {
    font-size: 19px;
    font-weight: 300;
    color: #2f5496;
}

.s-h2 {
    font: bold 23px "Liberation Serif", serif;
}

.s-normal {
    font: 16px "Liberation Serif", serif;
}

.gallery-scroll {
    display: flex;
    flex-direction: column;
}

.gallery-scroll button {
    width: 17px;
    height: 20px;
    display: grid;
    place-items: center;
    border: 1px solid #ababab;
}

.gallery-scroll button:disabled {
    border-color: #d4d4d4;
}

.editing {
    width: 86px;
}

.editing .group-body {
    flex-direction: column;
    padding-left: 11px;
}

.editing button {
    height: 23px;
    display: flex;
    align-items: center;
    gap: 3px;
}

.editing .drop {
    margin: 0;
}

.editing .far {
    margin-left: 6px;
}

.acrobat {
    width: 170px;
}

.acrobat .group-body {
    justify-content: center;
    gap: 2px;
    padding-top: 4px;
}

.acrobat .group-body button {
    display: flex;
    flex-direction: column;
    align-items: center;
    line-height: 16px;
}

.acrobat button svg {
    margin-bottom: 5px;
}

.collapse {
    margin: auto 8px 4px auto;
}

/* Document area */
.workspace {
    flex: 1;
    min-height: 0;
    display: flex;
    overflow: hidden;
    border-bottom: 1px solid #c8c8c8;
}

.pages {
    flex: 1;
    display: flex;
    flex-wrap: wrap;
    justify-content: center;
    align-content: flex-start;
    gap: 6px;
    padding-top: 6px;
    font-family: "DejaVu Sans", sans-serif;
    font-size: 4px;
    color: #000;
    text-shadow: 0 0 #000, 0 0 #000;
}

.page {
    width: 157px;
    height: 222px;
    padding: 5px;
    background: #fff;
    border: 1px solid #c3c3c3;
}

.frame {
    height: 100%;
    display: flex;
    flex-direction: column;
    padding: 8px 16px 0 14px;
    border: 3px double #000;
    border-right: 2px solid #000;
    border-bottom: 2px solid #000;
}

.frame p,
.frame h3 {
    flex: none;
    height: 10px;
    line-height: 10px;
    font-size: 4px;
    white-space: nowrap;
}

.frame :nth-child(even) {
    height: 11px;
}

.frame footer {
    margin-top: auto;
    text-align: center;
    font-size: 3px;
    color: #666;
    text-shadow: none;
}

.frame .in {
    padding-right: 4px;
}

.frame .item {
    padding-right: 5px;
}

.item::before {
    content: "•";
    display: inline-block;
    width: 4px;
}

.item.far::before {
    content: "–";
    width: 11px;
}

.frame .tight {
    height: 9px;
    margin-top: -2px;
}

.frame .tight2 {
    height: 7px;
}

.caret {
    display: inline-block;
    width: 1px;
    height: 7px;
    background: #000;
}

.sp4 {
    margin-top: 4px;
}

.sp6 {
    margin-top: 6px;
}

.sp8 {
    margin-top: 8px;
}

.sp9 {
    margin-top: 9px;
}

.sp14 {
    margin-top: 15px;
}

.sp16 {
    margin-top: 16px;
}

.sp20 {
    margin-top: 20px;
}

.sp58 {
    margin-top: 58px;
}

.cover {
    text-align: center;
}

.frame.cover p {
    height: 10px;
}

.frame.toc p {
    display: flex;
    align-items: center;
    height: 12px;
}

.frame.toc .head {
    height: 10px;
    justify-content: center;
    font-weight: bold;
}

.toc a {
    display: contents;
}

.toc a::after {
    content: "";
    flex: 1;
    border-bottom: 1px solid #333;
}

.frame .typo {
    text-decoration: underline wavy #e00 1px;
}

.scrollbar {
    width: 17px;
    display: flex;
    flex-direction: column;
    padding: 2px 1px 1px;
    background: #dcdcdc;
}

.scrollbar button {
    height: 16px;
    flex: none;
    display: grid;
    place-items: center;
    background: #fff;
    border: 1px solid #ababab;
}

.thumb {
    flex: 84;
    background: #fff;
    border: 1px solid #ababab;
}

.rail {
    flex: 16;
}

/* Status bar */
.status {
    height: 22px;
    flex: none;
    display: flex;
    align-items: center;
    gap: 17px;
    padding: 0 8px;
    background: #f3f3f3;
    font-size: 11px;
}

.status .count {
    margin-right: 8px;
}

.status .count + svg {
    margin: 0 -1px 0 -7px;
}

.view {
    display: flex;
    margin-left: auto;
}

.view button {
    width: 40px;
    height: 22px;
    display: grid;
    place-items: center;
}

.zoom {
    display: flex;
    align-items: center;
    gap: 5px;
    margin-left: -12px;
}

.zoom input {
    width: 100px;
    height: 12px;
    appearance: none;
    background: linear-gradient(#8a8a8a, #8a8a8a) center / 1px 8px no-repeat,
        linear-gradient(#ababab, #ababab) center / 100px 1px no-repeat;
}

.zoom input::-webkit-slider-thumb {
    appearance: none;
    width: 5px;
    height: 12px;
    background: #666;
}

.percent {
    margin-left: -5px;
}

/* Taskbar */
.taskbar {
    height: 40px;
    flex: none;
    display: flex;
    align-items: center;
    border-top: 1px solid #14385c;
    box-shadow: inset 0 1px #8dbbe0;
    background:
        linear-gradient(45deg, transparent 43%, #a8d4f5 49%, #a8d4f5 51%, transparent 57%) 905px 0 / 60px 40px no-repeat,
        linear-gradient(90deg, #1b5a8c 0, #2a78ab 60px, #3b8fc2 200px, #3d9bd1 400px, #3284c6 640px, #2370b9 850px, #1e5ea8 930px, #1c5299 990px, #1a4478 1100px, #1b4674 100%);
    color: #fff;
}

.start {
    margin-left: 7px;
}

.grip {
    width: 9px;
    height: 30px;
    margin-left: 13px;
    background: radial-gradient(circle, #0c2f50 1px, transparent 1px) 0 0 / 3px 3px;
}

.apps {
    display: flex;
    gap: 3px;
    margin-left: 8px;
}

.app {
    width: 55px;
    height: 38px;
    display: grid;
    place-items: center;
    border: 1px solid #1c4f78;
    border-radius: 3px;
    background: linear-gradient(150deg, #b9dbed, #5ea6cf 50%, #7fc0df);
    box-shadow: inset 0 0 0 1px #b5dcf0;
}

.app:first-child {
    margin-right: 4px;
    box-shadow: inset 0 0 0 1px #b5dcf0, 3px 0 #5ea6cf;
}

.app.wide {
    width: 59px;
}

.app.lit {
    width: 52px;
    background: linear-gradient(#e6f4fb, #a9d3ea);
    box-shadow: inset 0 0 0 1px #fff, 3px 0 #8cc3e0;
}

.app.last {
    margin-left: 8px;
}

.roya {
    width: 32px;
    height: 32px;
    line-height: 28px;
    background: #fff;
    color: #e01b22;
    font-family: "DejaVu Sans", sans-serif;
    font-size: 16px;
    font-weight: bold;
}

.tray {
    display: flex;
    align-items: center;
    gap: 8px;
    margin-left: auto;
}

.tray .grip {
    margin-right: 2px;
}

.lang {
    margin-right: 5px;
}

.clock {
    display: flex;
    flex-direction: column;
    align-items: center;
    margin: 0 12px 0 10px;
    font-size: 11px;
    line-height: 17px;
}

.peek {
    width: 15px;
    height: 38px;
    border: 1px solid #0d2c4c;
    background: linear-gradient(#6f95b5, #2a5680 50%, #1d4770);
}
```
